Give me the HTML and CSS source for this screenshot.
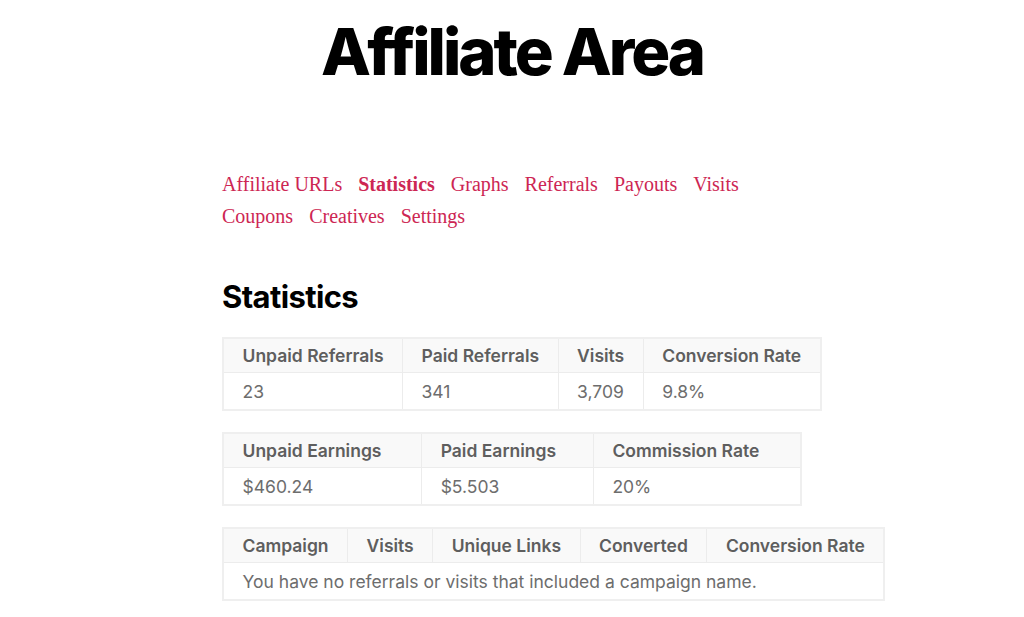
FILE: index.html
```html
<!DOCTYPE html>
<html lang="en">
<head>
  <meta charset="UTF-8">
  <meta name="viewport" content="width=device-width, initial-scale=1.0">
  <title>Affiliate Area</title>
  <link rel="stylesheet" href="styles.css">
</head>
<body>

<header class="entry-header">
  <h1 class="entry-title">Affiliate Area</h1>
</header>

<div class="entry-content">
  <ul class="affwp-tabs">
    <li><a href="#">Affiliate URLs</a></li>
    <li class="active"><a href="#">Statistics</a></li>
    <li><a href="#">Graphs</a></li>
    <li><a href="#">Referrals</a></li>
    <li><a href="#">Payouts</a></li>
    <li><a href="#">Visits</a></li>
    <li><a href="#">Coupons</a></li>
    <li><a href="#">Creatives</a></li>
    <li><a href="#">Settings</a></li>
  </ul>

  <h4 class="section-title">Statistics</h4>

  <table class="affwp-table">
    <thead>
      <tr>
        <th>Unpaid Referrals</th>
        <th>Paid Referrals</th>
        <th>Visits</th>
        <th>Conversion Rate</th>
      </tr>
    </thead>
    <tbody>
      <tr>
        <td>23</td>
        <td>341</td>
        <td>3,709</td>
        <td>9.8%</td>
      </tr>
    </tbody>
  </table>

  <table class="affwp-table">
    <thead>
      <tr>
        <th>Unpaid Earnings</th>
        <th>Paid Earnings</th>
        <th>Commission Rate</th>
      </tr>
    </thead>
    <tbody>
      <tr>
        <td>$460.24</td>
        <td>$5.503</td>
        <td>20%</td>
      </tr>
    </tbody>
  </table>

  <table class="affwp-table">
    <thead>
      <tr>
        <th>Campaign</th>
        <th>Visits</th>
        <th>Unique Links</th>
        <th>Converted</th>
        <th>Conversion Rate</th>
      </tr>
    </thead>
    <tbody>
      <tr>
        <td colspan="5">You have no referrals or visits that included a campaign name.</td>
      </tr>
    </tbody>
  </table>
</div>

</body>
</html>
```

FILE: styles.css
```css
* {
  box-sizing: border-box;
  margin: 0;
  padding: 0;
}

body {
  background: #fff;
  color: #000;
  font-family: "Liberation Serif", serif;
  overflow: hidden;
}

.entry-header {
  text-align: center;
  padding-top: 17px;
}

.entry-title {
  font-family: Inter, "Liberation Sans", sans-serif;
  font-weight: 800;
  font-size: 65px;
  line-height: 70px;
  letter-spacing: -0.047em;
}

.entry-content {
  width: 580px;
  margin: 0 auto;
  padding-top: 81px;
}

.affwp-tabs {
  list-style: none;
  display: flex;
  flex-wrap: wrap;
  column-gap: 16px;
  font-size: 20px;
  line-height: 32px;
}

.affwp-tabs a {
  color: #cd2653;
  text-decoration: none;
}

.affwp-tabs .active a {
  font-weight: bold;
}

.section-title {
  font-family: Inter, "Liberation Sans", sans-serif;
  font-weight: 700;
  font-size: 31px;
  letter-spacing: -0.02em;
  line-height: 1.2;
  margin: 46px 0 22px;
}

.affwp-table {
  width: 100%;
  border-collapse: collapse;
  white-space: nowrap;
  font-family: Inter, "Liberation Sans", sans-serif;
  font-size: 17.5px;
  color: #6d6d6d;
  margin-bottom: 21px;
  border: 2px solid #efefef;
}

.affwp-table th,
.affwp-table td {
  text-align: left;
  padding: 5px 18.5px;
  line-height: 23px;
  border: 1px solid #ececec;
}

.affwp-table th {
  font-weight: 600;
  background: #f9f9f9;
  color: #5e5e5e;
}

.affwp-table td {
  padding-top: 7px;
  padding-bottom: 6px;
}
```
